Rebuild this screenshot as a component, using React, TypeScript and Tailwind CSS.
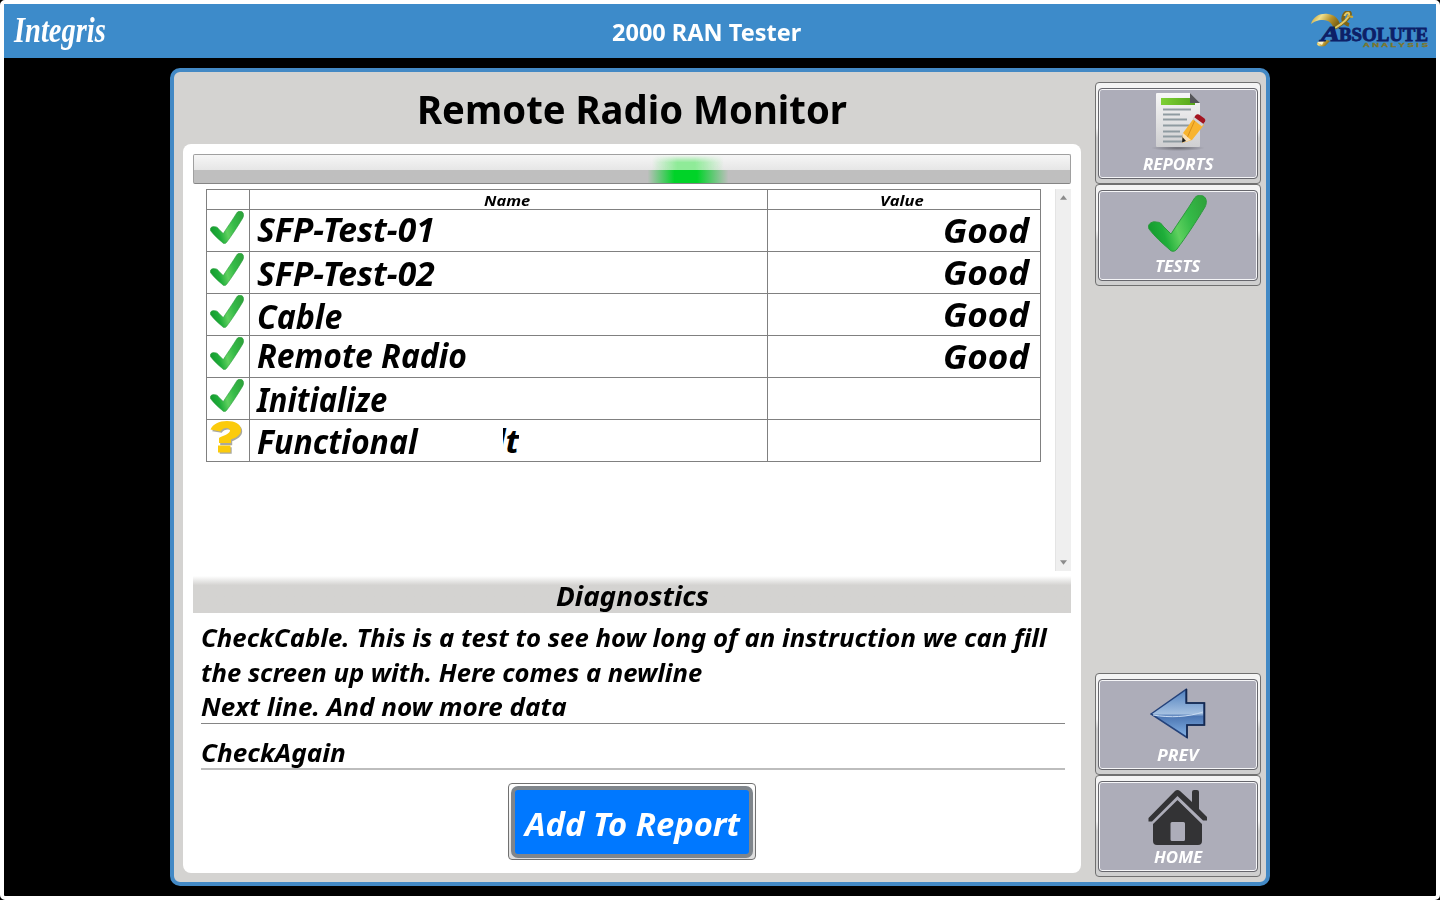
import { useLayoutEffect, useRef, type ReactNode } from "react";

/** Single-line text stretched horizontally so that it takes up `width` pixels. */
function Fit({ width, className = "", children }: { width: number; className?: string; children: ReactNode }) {
  const ref = useRef<HTMLSpanElement>(null);
  useLayoutEffect(() => {
    const el = ref.current;
    if (!el) return;
    el.style.transform = `scaleX(${width / el.offsetWidth})`;
  }, [width]);
  return (
    <span className={"block shrink-0 " + className} style={{ width }}>
      <span ref={ref} className="block w-max origin-left whitespace-pre">
        {children}
      </span>
    </span>
  );
}

function Check({ className, id }: { className: string; id: string }) {
  return (
    <svg className={className} viewBox="0 0 59 57" preserveAspectRatio="none">
      <defs>
        <linearGradient id={id} x1="0" y1="0.6" x2="1" y2="0.3">
          <stop offset="0" stopColor="#149a2e" />
          <stop offset="0.22" stopColor="#1fae3a" />
          <stop offset="0.45" stopColor="#5fd05f" />
          <stop offset="0.7" stopColor="#35bb48" />
          <stop offset="1" stopColor="#2fa53c" />
        </linearGradient>
      </defs>
      <path
        d="M1 34C-1 30 3 26 8 27C12 27 14 29 15 31L23 39C30 28 40 14 46 4C48 0 52 0 55 1C59 3 59 8 57 12C48 27 38 42 29 54C27 57 23 57 21 54C14 48 7 42 1 34Z"
        fill={"url(#" + id + ")"}
        stroke="#2c9a3d"
        strokeWidth="1"
      />
    </svg>
  );
}

function Question() {
  return (
    <svg className="h-[34px] w-[33px]" viewBox="0 0 33 34">
      <g transform="translate(1.200 1.200)" fill="#a9a9a0">
        <path d="M1 9C3 3 9 0.500 17 0.500C25 0.500 31 3 31 9C31 14 26 17 21 19V23H9V17C13 15 20 13 20 9.500C20 6.500 13 6.500 10.500 10.500ZM8.500 25H20.500V31.500H8.500Z" />
      </g>
      <path d="M0.500 8.500C3 3 9 0 17 0C25 0 31 3 31 9C31 14 26 17 21 18.500V22H9V17C13 14.500 20 13 20 9.500C20 6 13 6 10.500 10.500ZM8 24.500H20.500V31.500H8Z" fill="#fbcb0c" />
    </svg>
  );
}

function ReportIcon() {
  return (
    <svg className="h-[60px] w-[60px]" viewBox="0 0 60 60">
      <defs>
        <linearGradient id="paper" x1="0" y1="0" x2="0" y2="1">
          <stop offset="0" stopColor="#f7f7f7" />
          <stop offset="1" stopColor="#cfcfd1" />
        </linearGradient>
        <linearGradient id="bar" x1="0" y1="0" x2="1" y2="0">
          <stop offset="0" stopColor="#7ed035" />
          <stop offset="1" stopColor="#55a51a" />
        </linearGradient>
        <radialGradient id="ground">
          <stop offset="0" stopColor="#6b6b72" />
          <stop offset="1" stopColor="#adadb9" />
        </radialGradient>
      </defs>
      <ellipse cx="30" cy="56" rx="27" ry="3" fill="url(#ground)" />
      <path d="M9 1H42L52 11V54Q52 55 51 55H9Q8 55 8 54V2Q8 1 9 1Z" fill="url(#paper)" />
      <path d="M13 6H42V11H47V13H13Z" fill="url(#bar)" />
      <path d="M42 1L52 11H42Z" fill="#55565a" />
      <path d="M15 17.500H43M15 22.500H32M15 27.500H39M15 33.500H41M15 39.500H32M15 44.500H36M15 49.500H35" stroke="#8f9ba1" strokeWidth="2" />
      <path d="M46 26L56 33L44 48L34 51L35 41Z" fill="#f8b42f" />
      <path d="M47 28L39 46" stroke="#d98e18" strokeWidth="1" />
      <path d="M35 41L43 48L34 51Z" fill="#f8dfb7" />
      <path d="M34.500 45L38 49L34 50.500Z" fill="#1b1b1b" />
      <path d="M45 27L47.500 23.500Q49 21.500 51 22.500L56.500 26.500Q58 28 57 29.500L54 33.500Z" fill="#a31420" />
      <path d="M44.500 27L46 25L55.500 32L54 34.500Z" fill="#d4d4d4" />
    </svg>
  );
}

function ArrowIcon() {
  return (
    <svg className="h-[51px] w-[56px]" viewBox="0 0 56 51">
      <defs>
        <linearGradient id="arrow" x1="0" y1="0" x2="0" y2="1">
          <stop offset="0" stopColor="#4f80bf" />
          <stop offset="0.5" stopColor="#a3bfe0" />
          <stop offset="0.56" stopColor="#4c76b3" />
          <stop offset="1" stopColor="#86b4e6" />
        </linearGradient>
      </defs>
      <path d="M1 26L36 1.500V15H54V37H37V49.500Z" fill="url(#arrow)" stroke="#24427a" strokeWidth="1.500" />
      <path d="M36.500 1V15H54.500V37H37V50" fill="none" stroke="#14284f" strokeWidth="1.600" />
      <path d="M3 27C20 30 38 29 53 24" stroke="#c9dcf3" strokeWidth="1" fill="none" />
    </svg>
  );
}

function HomeIcon() {
  return (
    <svg className="h-[57px] w-[60px]" viewBox="0 0 60 57" fill="#333335">
      <path d="M29 10L54 34V52Q54 56 50 56H9Q5 56 5 52V34ZM24 33Q22.500 33 22.500 34.500V50.500Q22.500 52 24 52H35.500Q37 52 37 50.500V34.500Q37 33 35.500 33Z" fillRule="evenodd" />
      <path d="M4 34L29.500 9L55 34" fill="none" stroke="#adadb9" strokeWidth="3" />
      <path d="M0.500 29L27 2Q29.500 0 32 2L44 13V3Q44 1 46 1H49Q51 1 51 3V20L59 28V31.500H55L29.500 7L4 32.500H0.500Z" />
    </svg>
  );
}

function AbsoluteLogo() {
  return (
    <svg className="h-[40px] w-[120px]" viewBox="0 0 120 40">
      <defs>
        <linearGradient id="gold" x1="0" y1="0" x2="1" y2="0.4">
          <stop offset="0" stopColor="#b08a22" />
          <stop offset="0.35" stopColor="#f1e08c" />
          <stop offset="0.7" stopColor="#b5912b" />
          <stop offset="1" stopColor="#7d6416" />
        </linearGradient>
      </defs>
      <path d="M2 13C4 5 12 2 19 3C26 4 30 8 31 14L25 19C24 13 20 9 14 9C8 9 5 11 2 13Z" fill="url(#gold)" />
      <path d="M26 17C31 14 40 9 41 4C42 0 37 0 35 4C33 8 34 12 40 14" stroke="#7d6416" strokeWidth="3.500" fill="none" />
      <path d="M26 17C31 14 39 9 40 4C41 1 37 1 35.500 5" stroke="#e2c865" strokeWidth="2" fill="none" />
      <path d="M38 5L44 6" stroke="#c9a93c" strokeWidth="2" />
      <path d="M8 32C12 29 18 28 21 30L16 35C12 36 7 35 8 32Z" fill="url(#gold)" />
      <path d="M8 31L15 30L13 34Z" fill="#fdf6cb" />
      <text x="12" y="30" textLength="19" lengthAdjust="spacingAndGlyphs" fill="#0d2067" stroke="#0d2067" strokeWidth="1" fontFamily="Liberation Serif, serif" fontWeight="700" fontStyle="italic" fontSize="20">A</text>
      <text x="30" y="30" textLength="89" lengthAdjust="spacingAndGlyphs" fill="#0d2067" stroke="#0d2067" strokeWidth="0.900" fontFamily="Liberation Serif, serif" fontWeight="700" fontSize="19">BSOLUTE</text>
      <text x="54" y="36" textLength="65" lengthAdjust="spacingAndGlyphs" fill="#7f7526" stroke="#7f7526" strokeWidth="0.300" fontFamily="Liberation Sans, sans-serif" fontWeight="700" fontSize="6">A N A L Y S I S</text>
    </svg>
  );
}

function SideButton({ label, width, children }: { label: string; width: number; children: ReactNode }) {
  return (
    <button className="flex h-[102px] w-[166px] flex-col rounded-[4px] border border-[#707070] bg-linear-to-b from-[#f4f4f4] from-45% to-[#cfcfcf] to-55% px-[2px] pt-[5px] pb-[4px]">
      <span className="flex h-[91px] w-[160px] flex-col items-center rounded-[4px] border border-[#66666c] bg-[#adadb9] pt-px shadow-[inset_0_0_0_1px_#f6f6f8]">
        <span className="flex h-[64px] items-center justify-center">{children}</span>
        <Fit width={width} className="-ml-px font-['Open_Sans',sans-serif] text-[15.500px] leading-[20px] font-bold text-white italic">
          {label}
        </Fit>
      </span>
    </button>
  );
}

const rows = [
  { name: "SFP-Test-01", width: 178, shift: "pb-[3px]", value: "Good" },
  { name: "SFP-Test-02", width: 178, shift: "pt-[1px]", value: "Good" },
  { name: "Cable", width: 85, shift: "pt-[3px]", value: "Good" },
  { name: "Remote Radio", width: 210, shift: "pb-[4px]", value: "Good" },
  { name: "Initialize", width: 130, shift: "pt-[1px]", value: "" },
  { name: "Functional", width: 160, shift: "pb-[1px]", value: "" },
];

export default function App() {
  return (
    <div className="h-[900px] w-[1440px] overflow-hidden bg-black font-['Noto_Sans',sans-serif] text-black">
      <div className="flex h-full flex-col rounded-[5px] border-4 border-white bg-black">
        <header className="flex h-[54px] shrink-0 items-center justify-between bg-[#3d8bca] pr-[7px] pl-[10px]">
          <div className="flex w-[89px]">
            <Fit width={92} className="font-['Liberation_Serif',serif] text-[35px] leading-[56px] font-bold text-white italic">
              Integris
            </Fit>
          </div>
          <Fit width={189} className="pt-[3px] text-[22.500px] leading-[54px] font-bold text-white">
            2000 RAN Tester
          </Fit>
          <AbsoluteLogo />
        </header>

        <main className="flex flex-1 justify-center pt-[10px]">
          <div className="flex h-[818px] w-[1100px] justify-between rounded-[10px] border-4 border-[#4389c5] bg-[#d4d3d1] pr-[5px] pl-[9px]">
            <section className="flex w-[898px] flex-col">
              <h1 className="flex h-[72px] justify-center">
                <Fit width={430} className="text-[39.500px] leading-[75px] font-bold">
                  Remote Radio Monitor
                </Fit>
              </h1>

              <div className="flex h-[729px] flex-col rounded-[8px] bg-white px-[10px] pt-[10px]">
                <div className="h-[30px] shrink-0 overflow-hidden rounded-[2px] border border-[#a0a0a0] border-b-[#858585] bg-linear-to-b from-[#f6f6f6] from-0% via-[#e6e6e6] via-53% to-[#bfbfbf] to-53%">
                  <div className="ml-[449px] flex h-full w-[90px] flex-col">
                    <div className="h-[15px] bg-[linear-gradient(to_right,#8feb9800_10%,#8feb98_38%,#8feb98_58%,#8feb9800_90%)] mask-t-from-50%" />
                    <div className="flex-1 bg-[linear-gradient(to_right,#00d32800_5%,#00d328_35%,#00d328_60%,#00d32800_95%)]" />
                  </div>
                </div>

                <div className="mt-[5px] flex h-[382px] shrink-0 justify-between pl-[13px]">
                  <div className="h-[273px] w-[835px] border border-[#808080]">
                    <div className="flex h-[20px] border-b border-[#808080] font-['Open_Sans',sans-serif] text-[15px] leading-[21px] font-bold italic">
                      <div className="w-[43px] border-r border-[#808080]" />
                      <div className="flex w-[518px] justify-center border-r border-[#808080]">
                        <Fit width={46} className="-ml-[3px]">Name</Fit>
                      </div>
                      <div className="flex w-[272px] justify-center">
                        <Fit width={44} className="-ml-[4px]">Value</Fit>
                      </div>
                    </div>
                    {rows.map((row, i) => (
                      <div key={row.name} className="flex h-[42px] border-b border-[#808080] last:border-b-0">
                        <div className="flex w-[43px] items-start border-r border-[#808080] pt-[1px] pl-[3px]">
                          {i < 5 ? <Check id={"check" + i} className="h-[33px] w-[34px]" /> : <Question />}
                        </div>
                        <div className={"flex w-[518px] items-center border-r border-[#808080] pl-[7px] text-[34px] leading-[34px] font-bold italic " + row.shift}>
                          <Fit width={row.width}>{row.name}</Fit>
                          {i === 5 && (
                            <span className="ml-[86px] flex h-[36px] w-[16px] justify-end overflow-hidden text-[33px] leading-[36px] font-bold">
                              <span>lt</span>
                            </span>
                          )}
                        </div>
                        <div className="flex w-[272px] items-center justify-end pr-[11px] pb-[1px] text-[33.500px] leading-[38px] font-bold italic">
                          {row.value && <Fit width={86}>{row.value}</Fit>}
                        </div>
                      </div>
                    ))}
                  </div>
                  <div className="flex w-[16px] flex-col items-center justify-between border-l border-[#e4e4e4] bg-[#efefef] py-[6px]">
                    <svg className="h-[5px] w-[7px]" viewBox="0 0 8 5"><path d="M0 5L4 0L8 5Z" fill="#8c8c8c" /></svg>
                    <svg className="h-[5px] w-[7px]" viewBox="0 0 8 5"><path d="M0 0L4 5L8 0Z" fill="#8c8c8c" /></svg>
                  </div>
                </div>

                <h2 className="mt-[5px] flex h-[37px] shrink-0 justify-center bg-linear-to-b from-white to-[#d4d3d1] to-25%">
                  <Fit width={153} className="text-[26px] leading-[40px] font-bold italic">
                    Diagnostics
                  </Fit>
                </h2>

                <div className="mx-[8px] mr-[6px] flex h-[111px] shrink-0 flex-col border-b border-[#858585] pt-[8px] text-[24.500px] leading-[34.500px] font-bold italic">
                  <Fit width={846}>CheckCable. This is a test to see how long of an instruction we can fill</Fit>
                  <Fit width={501}>the screen up with. Here comes a newline</Fit>
                  <Fit width={366}>Next line. And now more data</Fit>
                </div>
                <div className="mx-[8px] mr-[6px] flex h-[46px] shrink-0 flex-col border-b-2 border-[#bdbdbd] pt-[11px] text-[24.500px] leading-[35px] font-bold italic">
                  <Fit width={145}>CheckAgain</Fit>
                </div>

                <button className="mt-[13px] flex h-[77px] w-[248px] shrink-0 self-center rounded-[4px] border border-[#707070] bg-linear-to-b from-white to-[#dddddd] p-[2px]">
                  <span className="flex h-[72px] w-full justify-center rounded-[7px] border-4 border-[#7f858b] bg-[#0078ff]">
                    <Fit width={215} className="text-[31.500px] leading-[67px] font-bold text-white italic">
                      Add To Report
                    </Fit>
                  </span>
                </button>
              </div>
            </section>

            <nav className="flex w-[166px] flex-col justify-between pt-[10px] pb-[5px]">
              <div className="flex flex-col">
                <SideButton label="REPORTS" width={70}><ReportIcon /></SideButton>
                <SideButton label="TESTS" width={45}><Check id="checkBig" className="mr-px mb-[2px] h-[57px] w-[59px]" /></SideButton>
              </div>
              <div className="flex flex-col">
                <SideButton label="PREV" width={41}><ArrowIcon /></SideButton>
                <SideButton label="HOME" width={48}><div className="pt-[4px]"><HomeIcon /></div></SideButton>
              </div>
            </nav>
          </div>
        </main>
      </div>
    </div>
  );
}
